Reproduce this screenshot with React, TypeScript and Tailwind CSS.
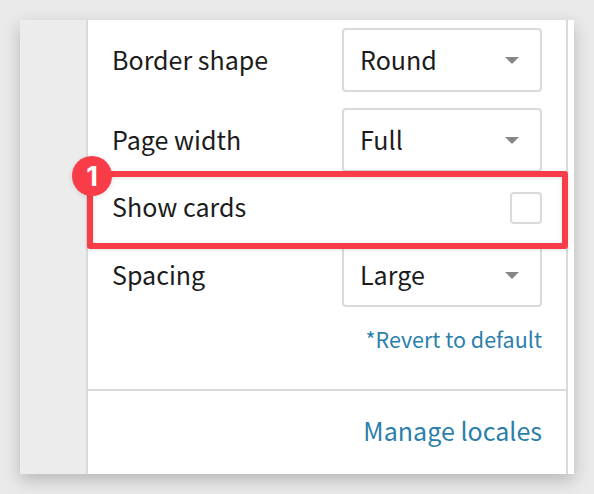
import React from "react";

function Caret() {
  return (
    <svg className="mr-[21px] h-[7px] w-[14px]" viewBox="0 0 14 7" fill="#868686">
      <path d="M0 0H14L7 7Z" />
    </svg>
  );
}

function SelectRow({ label, value }: { label: string; value: string }) {
  return (
    <div className="flex h-16 items-center justify-between">
      <span className="pb-[2px]">{label}</span>
      <div className="flex h-16 w-[200px] items-center justify-between rounded-[4px] border-2 border-[#dadada] bg-white pl-4">
        <span className="pb-[2px]">{value}</span>
        <Caret />
      </div>
    </div>
  );
}

export default function App() {
  return (
    <div className="h-[494px] w-[594px] overflow-hidden bg-[#eaeaea] p-5 font-['Noto_Sans_CJK_SC',sans-serif] text-[25.05px] leading-8 text-[#1c1c1c]">
      <div className="relative flex h-[454px] w-[554px] bg-white shadow-[0_6px_16px_rgba(0,0,0,0.22)]">
        <div className="w-[66px] shrink-0 bg-[#ececec]" />
        <div className="flex w-[482px] flex-col border-x-2 border-[#dadada]">
          <div className="flex h-[369px] flex-col px-6 pt-2">
            <SelectRow label="Border shape" value="Round" />
            <div className="h-4" />
            <SelectRow label="Page width" value="Full" />
            <div className="flex h-[71px] items-center justify-between">
              <span className="pb-[3px]">Show cards</span>
              <div className="h-8 w-8 rounded-[4px] border-2 border-[#dadada]" />
            </div>
            <SelectRow label="Spacing" value="Large" />
            <div className="mt-4 text-right text-[21.5px] text-[#2c7fab]">*Revert to default</div>
          </div>
          <div className="flex flex-1 items-center justify-end border-t-2 border-[#dadada] pr-6 pb-[5px] text-[#2c7fab]">
            Manage locales
          </div>
        </div>
        <div className="absolute top-[151px] left-[67px] h-[78px] w-[481px] rounded-[3px] border-6 border-[#f93d48] shadow-[0_1px_4px_rgba(0,0,0,0.12),inset_0_1px_4px_rgba(0,0,0,0.12)]" />
        <div className="absolute top-[136px] left-[52px] flex h-10 w-10 items-center justify-center rounded-full bg-[#f93d48] pt-[2px] font-['Inter',sans-serif] text-[27px] font-bold text-white shadow-[0_1px_5px_rgba(0,0,0,0.12)]">
          1
        </div>
      </div>
    </div>
  );
}
